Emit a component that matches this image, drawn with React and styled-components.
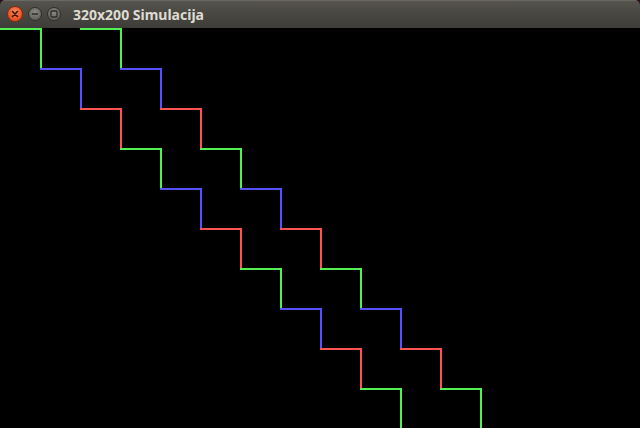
import React from "react";
import styled, { createGlobalStyle } from "styled-components";

const Global = createGlobalStyle`
  html, body { margin: 0; padding: 0; background: #2c0a22; }
  body { width: 640px; height: 428px; overflow: hidden; }
`;

const Window = styled.div`
  width: 640px;
  height: 428px;
  display: flex;
  flex-direction: column;
  border-radius: 5px 5px 0 0;
  overflow: hidden;
  background: #000;
`;

const TitleBar = styled.div`
  height: 28px;
  flex: 0 0 28px;
  display: flex;
  align-items: center;
  padding-left: 7px;
  box-sizing: border-box;
  background: linear-gradient(#56544d 0%, #4a4943 40%, #3d3c38 100%);
  border-top: 1px solid #6a6862;
`;

const Buttons = styled.div`
  display: flex;
  gap: 5px;
  align-items: center;
  margin-top: -1px;
`;

const WinButton = styled.div`
  width: ${(p) => (p.$close ? 16 : 14)}px;
  height: ${(p) => (p.$close ? 16 : 14)}px;
  border-radius: 50%;
  box-sizing: border-box;
  display: flex;
  align-items: center;
  justify-content: center;
  border: 1px solid ${(p) => (p.$close ? "#8a2a10" : "#2f2e2a")};
  background: ${(p) =>
    p.$close
      ? "radial-gradient(circle at 50% 35%, #f88a5c 0%, #ee5a2a 55%, #c8421a 100%)"
      : "radial-gradient(circle at 50% 35%, #8a8882 0%, #6c6a64 60%, #55534e 100%)"};
`;

const Title = styled.div`
  margin-left: 12px;
  font-family: "Noto Sans", "DejaVu Sans", sans-serif;
  font-weight: 700;
  font-size: 14px;
  color: #dfdbd2;
  margin-top: -1px;
`;

const Canvas = styled.svg`
  display: block;
  width: 640px;
  height: 400px;
  background: #000;
`;

const COLORS = ["#52f052", "#5252ff", "#ff5252"];

function Stairs({ ox }) {
  const items = [];
  for (let i = 0; i < 10; i++) {
    const c = COLORS[i % 3];
    items.push(
      <rect key={`h${i}`} x={ox + 40 * i} y={40 * i} width={42} height={2} fill={c} />,
      <rect key={`v${i}`} x={ox + 40 * i + 40} y={40 * i} width={2} height={42} fill={c} />
    );
  }
  return <g>{items}</g>;
}

export default function App() {
  return (
    <>
      <Global />
      <Window>
        <TitleBar>
          <Buttons>
            <WinButton $close>
              <svg width="8" height="8" viewBox="0 0 8 8">
                <path d="M1.5 1.5 L6.5 6.5 M6.5 1.5 L1.5 6.5" stroke="#3a1408" strokeWidth="1.6" strokeLinecap="round" />
              </svg>
            </WinButton>
            <WinButton>
              <svg width="8" height="8" viewBox="0 0 8 8">
                <path d="M1 4 L7 4" stroke="#2e2d29" strokeWidth="1.6" />
              </svg>
            </WinButton>
            <WinButton>
              <svg width="8" height="8" viewBox="0 0 8 8">
                <rect x="1" y="1" width="6" height="6" rx="1" fill="none" stroke="#2e2d29" strokeWidth="1.3" />
              </svg>
            </WinButton>
          </Buttons>
          <Title>320x200 Simulacija</Title>
        </TitleBar>
        <Canvas viewBox="0 0 640 400" shapeRendering="crispEdges">
          <Stairs ox={0} />
          <Stairs ox={80} />
        </Canvas>
      </Window>
    </>
  );
}
